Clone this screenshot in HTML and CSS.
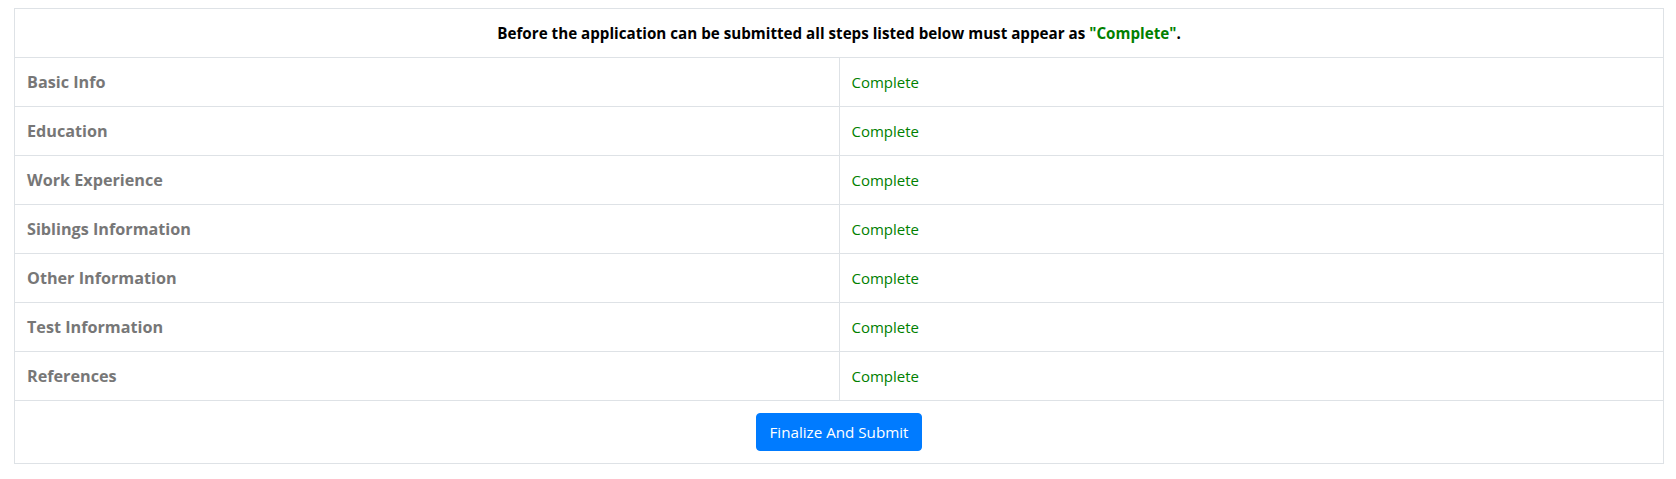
FILE: index.html
```html
<!DOCTYPE html>
<html lang="en">
<head>
<meta charset="utf-8">
<title>Application Steps</title>
<link rel="stylesheet" href="styles.css">
</head>
<body>
<div class="wrap">
  <table class="steps">
    <thead>
      <tr>
        <th colspan="2" class="notice">Before the application can be submitted all steps listed below must appear as <span class="ok">"Complete"</span>.</th>
      </tr>
    </thead>
    <tbody>
      <tr><td class="label">Basic Info</td><td class="status">Complete</td></tr>
      <tr><td class="label">Education</td><td class="status">Complete</td></tr>
      <tr><td class="label">Work Experience</td><td class="status">Complete</td></tr>
      <tr><td class="label">Siblings Information</td><td class="status">Complete</td></tr>
      <tr><td class="label">Other Information</td><td class="status">Complete</td></tr>
      <tr><td class="label">Test Information</td><td class="status">Complete</td></tr>
      <tr><td class="label">References</td><td class="status">Complete</td></tr>
      <tr><td colspan="2" class="actions"><button class="btn" type="button">Finalize And Submit</button></td></tr>
    </tbody>
  </table>
</div>
</body>
</html>
```

FILE: styles.css
```css
html, body {
  margin: 0;
  padding: 0;
  background: #fff;
}
body {
  font-family: "Segoe UI", "Open Sans", "Noto Sans", sans-serif;
  font-size: 16px;
  line-height: 1.5;
  color: #212529;
}
.wrap {
  padding: 8px 12px 0 14px;
}
.steps {
  width: 100%;
  border-collapse: collapse;
  table-layout: fixed;
  border: 1px solid #dee2e6;
}
.steps th, .steps td {
  border: 1px solid #dee2e6;
  padding: 12px;
  vertical-align: top;
  text-align: left;
  height: 24px;
  line-height: 24px;
}
.steps .notice {
  text-align: center;
  font-size: 15.2px;
  font-weight: bold;
  color: #000;
}
.ok {
  color: #008000;
}
.label {
  font-weight: bold;
  font-size: 16.2px;
  color: #777;
}
.status {
  color: #008000;
  font-size: 15px;
}
.steps .actions {
  text-align: center;
  height: 38px;
}
.btn {
  font-family: inherit;
  font-size: 15.2px;
  line-height: 24px;
  color: #fff;
  background: #007bff;
  border: 1px solid #007bff;
  border-radius: 4px;
  padding: 6px 12px;
  cursor: pointer;
}
```
